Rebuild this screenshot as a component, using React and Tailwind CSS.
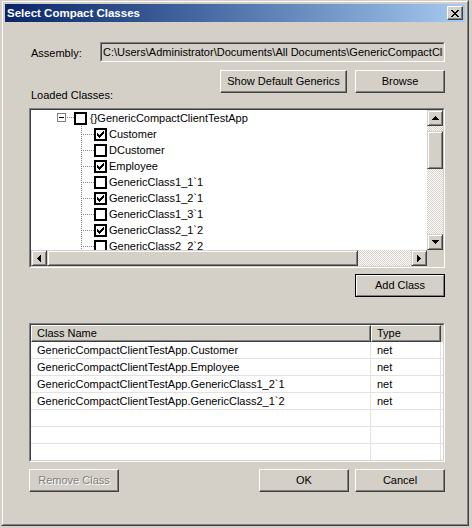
import React from "react";

const raised =
  "border border-white border-r-[#404040] border-b-[#404040] shadow-[inset_-1px_-1px_#808080]";
const sraised =
  "border border-[#d4d0c8] border-r-[#404040] border-b-[#404040] shadow-[inset_1px_1px_#ffffff,inset_-1px_-1px_#808080]";
const checker =
  "[background-image:repeating-conic-gradient(#ffffff_0_25%,#d4d0c8_0_50%)] [background-size:2px_2px]";

function Btn({ children, className = "", disabled }) {
  return (
    <div
      className={`h-[23px] w-[90px] flex items-center justify-center bg-[#d4d0c8] ${raised} ${
        disabled ? "text-[#808080] [text-shadow:1px_1px_0_#ffffff]" : "text-black"
      } ${className}`}
    >
      {children}
    </div>
  );
}

function Sunken({ className = "", innerClass = "", children }) {
  return (
    <div className={`border border-[#808080] border-r-white border-b-white ${className}`}>
      <div
        className={`w-full h-full border border-[#404040] border-r-[#d4d0c8] border-b-[#d4d0c8] ${innerClass}`}
      >
        {children}
      </div>
    </div>
  );
}

const Arrow = ({ dir }) => {
  const paths = {
    up: "M3 0h1v1H3zM2 1h3v1H2zM1 2h5v1H1zM0 3h7v1H0z",
    down: "M0 0h7v1H0zM1 1h5v1H1zM2 2h3v1H2zM3 3h1v1H3z",
    left: "M0 3h1v1H0zM1 2h1v3H1zM2 1h1v5H2zM3 0h1v7H3z",
    right: "M0 0h1v7H0zM1 1h1v5H1zM2 2h1v3H2zM3 3h1v1H3z",
  };
  const v = dir === "up" || dir === "down";
  return (
    <svg width={v ? 7 : 4} height={v ? 4 : 7} viewBox={v ? "0 0 7 4" : "0 0 4 7"} shapeRendering="crispEdges">
      <path d={paths[dir]} fill="#000" />
    </svg>
  );
};

function SBtn({ dir }) {
  return (
    <div className={`w-[16px] h-[16px] shrink-0 flex items-center justify-center bg-[#d4d0c8] ${sraised}`}>
      <Arrow dir={dir} />
    </div>
  );
}

function Check({ checked }) {
  return (
    <svg width="13" height="13" viewBox="0 0 13 13" shapeRendering="crispEdges" className="shrink-0">
      <rect x="0" y="0" width="13" height="13" fill="#000" />
      <rect x="2" y="2" width="9" height="9" fill="#fff" />
      {checked && (
        <path
          d="M3 5h1v3H3zM4 6h1v3H4zM5 7h1v3H5zM6 6h1v3H6zM7 5h1v3H7zM8 4h1v3H8zM9 3h1v3H9z"
          fill="#000"
        />
      )}
    </svg>
  );
}

const items = [
  ["Customer", true],
  ["DCustomer", false],
  ["Employee", true],
  ["GenericClass1_1`1", false],
  ["GenericClass1_2`1", true],
  ["GenericClass1_3`1", false],
  ["GenericClass2_1`2", true],
  ["GenericClass2_2`2", false],
  ["GenericClass2_3`2", false],
];

const rows = [
  ["GenericCompactClientTestApp.Customer", "net"],
  ["GenericCompactClientTestApp.Employee", "net"],
  ["GenericCompactClientTestApp.GenericClass1_2`1", "net"],
  ["GenericCompactClientTestApp.GenericClass2_1`2", "net"],
  ["", ""],
  ["", ""],
  ["", ""],
];

export default function App() {
  return (
    <div className="w-[472px] h-[528px] bg-[#d4d0c8] font-['Liberation_Sans',Arial,sans-serif] text-[11px] leading-[13px] text-black overflow-hidden">
      <div className="ml-[1px] w-[468px] h-[526px] border border-[#d4d0c8] border-r-[#404040] border-b-[#404040]">
        <div className="w-full h-full border border-white border-r-[#808080] border-b-[#808080] p-[2px] flex flex-col">
          {/* title bar */}
          <div className="h-[18px] shrink-0 flex items-center bg-linear-to-r from-[#0a246a] to-[#a6caf0] pl-[2px] pr-[2px]">
            <span className="text-white font-bold text-[11.5px] leading-[14px]">Select Compact Classes</span>
            <div className={`ml-auto w-[16px] h-[14px] flex items-center justify-center bg-[#d4d0c8] ${raised}`}>
              <svg width="8" height="7" viewBox="0 0 8 7" shapeRendering="crispEdges">
                <path
                  d="M0 0h2v1H0zM6 0h2v1H6zM1 1h2v1H1zM5 1h2v1H5zM2 2h4v1H2zM3 3h2v1H3zM2 4h4v1H2zM1 5h2v1H1zM5 5h2v1H5zM0 6h2v1H0zM6 6h2v1H6z"
                  fill="#000"
                />
              </svg>
            </div>
          </div>

          {/* body */}
          <div className="pl-[24px] pr-[20px] flex flex-col">
            <div className="mt-[20px] h-[20px] flex items-center">
              <div className="w-[71px] pl-[2px] pt-[2px]">Assembly:</div>
              <Sunken className="flex-1 h-[20px] min-w-0" innerClass="bg-[#d4d0c8] flex items-center pl-[1px] overflow-hidden">
                <span className="whitespace-nowrap">
                  C:\Users\Administrator\Documents\All Documents\GenericCompactClientTestApp\bin\Debug\GenericCompactClientTestApp.exe
                </span>
              </Sunken>
            </div>

            <div className="mt-[8px] h-[23px] flex items-start">
              <div className="pl-[2px] mt-[19px] whitespace-nowrap">Loaded Classes:</div>
              <div className="ml-auto flex gap-[8px]">
                <Btn className="w-[127px]">Show Default Generics</Btn>
                <Btn>Browse</Btn>
              </div>
            </div>

            {/* tree */}
            <Sunken className="mt-[15px] h-[160px]" innerClass="bg-white grid grid-cols-[396px_16px] grid-rows-[140px_16px]">
              <div className="overflow-hidden">
                <div className="h-[16px] flex items-center">
                  <div className="w-[26px] shrink-0" />
                  <svg width="17" height="16" viewBox="0 0 17 16" shapeRendering="crispEdges" className="shrink-0">
                    <rect x="0.5" y="3.5" width="8" height="8" fill="#fff" stroke="#808080" />
                    <path d="M2 7.5h5" stroke="#000" />
                    <path d="M10 7.5h7" stroke="#808080" strokeDasharray="1 1" />
                  </svg>
                  <Check checked={false} />
                  <span className="ml-[3px] whitespace-nowrap">{"{}"}GenericCompactClientTestApp</span>
                </div>
                {items.map(([name, c]) => (
                  <div key={name} className="h-[16px] flex items-center">
                    <div className="w-[50px] shrink-0" />
                    <svg width="13" height="16" viewBox="0 0 13 16" shapeRendering="crispEdges" className="shrink-0">
                      <path d="M0.5 0v16" stroke="#808080" strokeDasharray="1 1" />
                      <path d="M2 8.5h11" stroke="#808080" strokeDasharray="1 1" />
                    </svg>
                    <Check checked={c} />
                    <span className="ml-[2px] whitespace-nowrap">{name}</span>
                  </div>
                ))}
              </div>
              <div className="flex flex-col">
                <SBtn dir="up" />
                <div className={`h-[5px] ${checker}`} />
                <div className={`h-[38px] bg-[#d4d0c8] ${sraised}`} />
                <div className={`flex-1 ${checker}`} />
                <SBtn dir="down" />
              </div>
              <div className="flex">
                <SBtn dir="left" />
                <div className={`w-[311px] h-[16px] bg-[#d4d0c8] ${sraised}`} />
                <div className={`flex-1 ${checker}`} />
                <SBtn dir="right" />
              </div>
              <div className="bg-[#d4d0c8]" />
            </Sunken>

            <div className="mt-[6px] flex justify-end">
              <div className="h-[23px] w-[90px] border border-black">
                <div className={`w-full h-full flex items-center justify-center bg-[#d4d0c8] border border-white border-r-[#808080] border-b-[#808080]`}>
                  Add Class
                </div>
              </div>
            </div>

            {/* list */}
            <Sunken className="mt-[26px] h-[139px]" innerClass="bg-white overflow-hidden flex flex-col">
              <div className="h-[17px] shrink-0 flex bg-[#d4d0c8]">
                <div className={`w-[340px] pl-[5px] flex items-center ${raised}`}>Class Name</div>
                <div className={`w-[70px] pl-[5px] flex items-center ${raised}`}>Type</div>
                <div className="flex-1" />
              </div>
              {rows.map(([n, t], i) => (
                <div key={i} className="h-[17px] shrink-0 flex border-b border-[#e2e2e2]">
                  <div className="w-[340px] pl-[6px] flex items-center border-r border-[#e2e2e2] whitespace-nowrap">{n}</div>
                  <div className="w-[70px] pl-[6px] flex items-center border-r border-[#e2e2e2]">{t}</div>
                </div>
              ))}
            </Sunken>

            <div className="mt-[7px] flex">
              <Btn disabled>Remove Class</Btn>
              <div className="ml-auto flex gap-[6px]">
                <Btn>OK</Btn>
                <Btn>Cancel</Btn>
              </div>
            </div>
          </div>
        </div>
      </div>
    </div>
  );
}
